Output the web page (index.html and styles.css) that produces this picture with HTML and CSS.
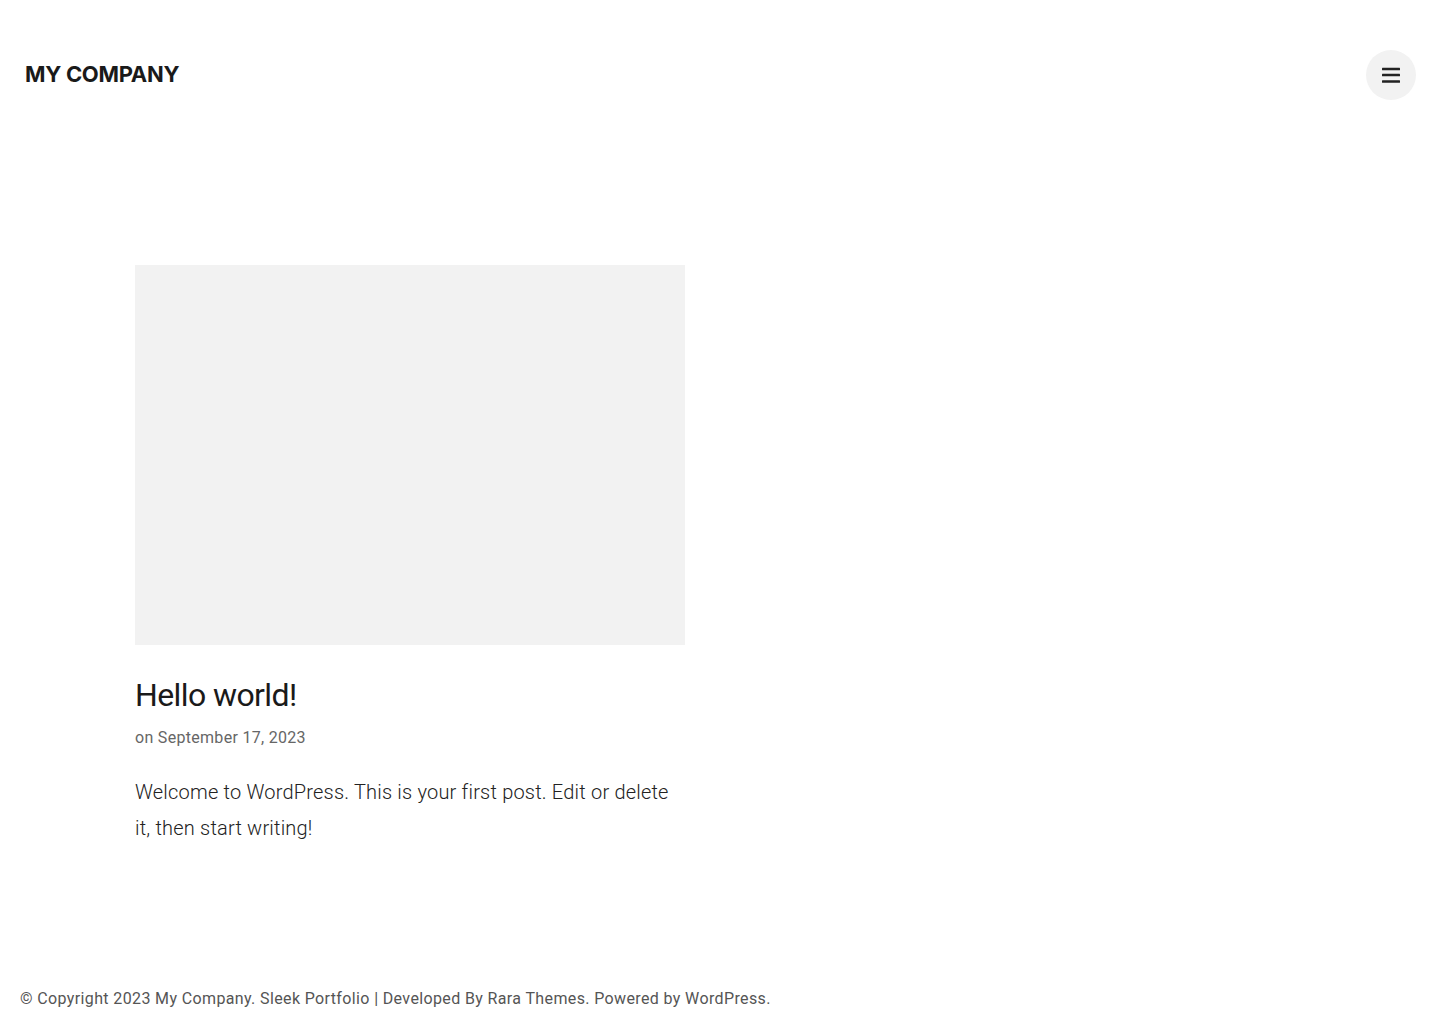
FILE: index.html
```html
<!DOCTYPE html>
<html lang="en">
<head>
<meta charset="utf-8">
<title>My Company</title>
<link rel="stylesheet" href="styles.css">
</head>
<body>
<header class="site-header">
  <a class="site-title" href="#">MY COMPANY</a>
  <button class="menu-toggle" aria-label="Menu">
    <svg width="18" height="16" viewBox="0 0 18 16"><rect x="0" y="0.75" width="18" height="2.5" rx="0.5" fill="#222"/><rect x="0" y="6.75" width="18" height="2.5" rx="0.5" fill="#222"/><rect x="0" y="13.25" width="18" height="2.5" rx="0.5" fill="#222"/></svg>
  </button>
</header>
<main class="site-main">
  <article class="post">
    <div class="post-thumb"></div>
    <h2 class="post-title">Hello world!</h2>
    <div class="post-meta">on <span class="post-date">September 17, 2023</span></div>
    <p class="post-excerpt">Welcome to WordPress. This is your first post. Edit or delete it, then start writing!</p>
  </article>
</main>
<footer class="site-footer">
  © Copyright 2023 My Company. Sleek Portfolio | Developed By Rara Themes. Powered by WordPress.
</footer>
</body>
</html>
```
FILE: styles.css
```css
* { box-sizing: border-box; }
html, body { margin: 0; padding: 0; }
body {
  font-family: Roboto, "Liberation Sans", sans-serif;
  font-weight: 300;
  color: #222;
  background: #fff;
  min-height: 1036px;
  display: flex;
  flex-direction: column;
}
.site-header {
  display: flex;
  align-items: center;
  justify-content: space-between;
  padding: 50px 24px 0 25px;
  height: 100px;
}
.site-title {
  font-family: Inter, "Liberation Sans", sans-serif;
  font-weight: 700;
  font-size: 22px;
  color: #1a1a1a;
  text-decoration: none;
  letter-spacing: -0.3px;
  margin-top: -2px;
}
.menu-toggle {
  width: 50px;
  height: 50px;
  border-radius: 50%;
  border: 0;
  background: #f2f2f2;
  display: flex;
  align-items: center;
  justify-content: center;
  padding: 0;
}
.site-main {
  flex: 1;
  padding: 165px 0 0 135px;
}
.post { width: 550px; }
.post-thumb {
  height: 380px;
  background: #f2f2f2;
}
.post-title {
  font-family: Roboto, "Liberation Sans", sans-serif;
  font-weight: 400;
  font-size: 32px;
  line-height: 40px;
  letter-spacing: -0.6px;
  margin: 30px 0 0;
  color: #1a1a1a;
}
.post-meta {
  font-size: 16px;
  font-weight: 400;
  color: #666;
  margin-top: 11px;
  line-height: 24px;
  letter-spacing: 0.3px;
}
.post-excerpt {
  font-size: 20px;
  line-height: 36px;
  letter-spacing: 0.2px;
  margin: 24px 0 0;
  color: #222;
}
.site-footer {
  padding: 0 20px 25px;
  font-size: 16px;
  line-height: 24px;
  letter-spacing: 0.37px;
  color: #555;
  font-weight: 400;
}
```
